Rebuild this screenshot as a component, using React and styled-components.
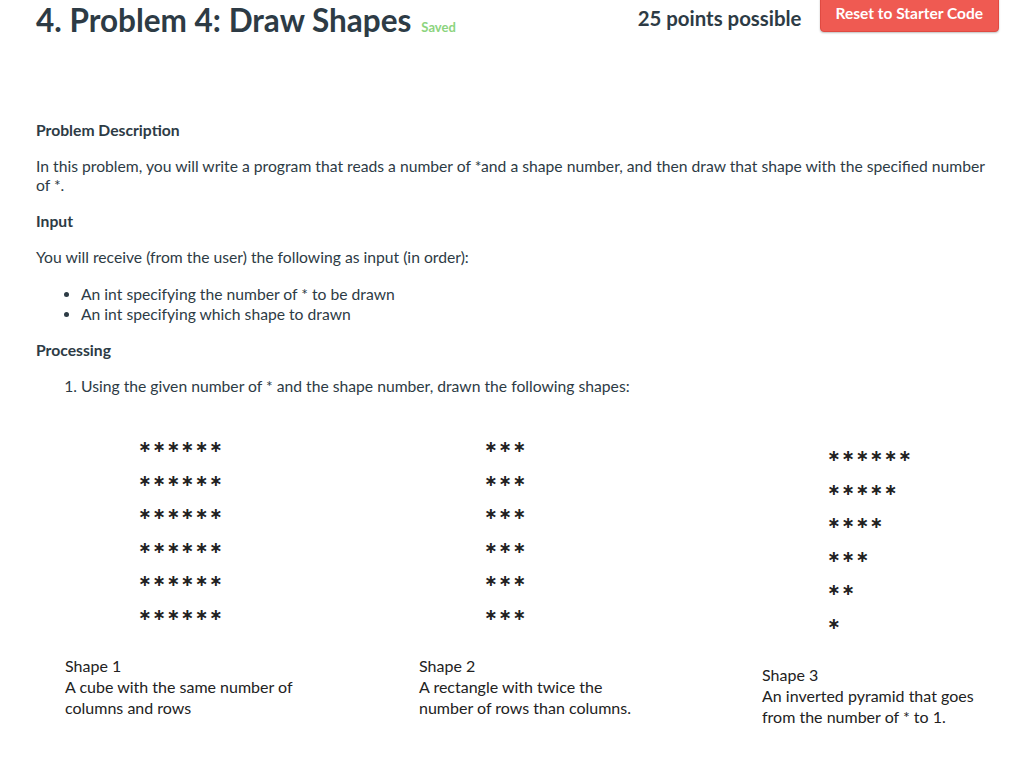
import React from "react";
import styled, { createGlobalStyle } from "styled-components";

const GlobalStyle = createGlobalStyle`
  body {
    margin: 0;
    background: #ffffff;
    font-family: Lato, "Open Sans", sans-serif;
    color: #2d3b45;
  }
`;

const Page = styled.div`
  width: 1024px;
  height: 762px;
  overflow: hidden;
  padding: 0 25px 0 36px;
  box-sizing: border-box;
`;

const Header = styled.div`
  display: flex;
  align-items: flex-start;
  justify-content: space-between;
`;

const TitleWrap = styled.div`
  display: flex;
  align-items: baseline;
  gap: 10px;
  margin-top: 1px;
`;

const Title = styled.h1`
  margin: 0;
  font-size: 31.5px;
  line-height: 38px;
  font-weight: 700;
  color: #2d3b45;
`;

const Saved = styled.span`
  font-size: 13px;
  font-weight: 700;
  color: #8cd47e;
`;

const Actions = styled.div`
  display: flex;
  align-items: flex-start;
  gap: 18px;
`;

const Points = styled.div`
  font-size: 20.4px;
  font-weight: 700;
  margin-top: 5px;
  line-height: 26px;
`;

const ResetButton = styled.button`
  margin-top: -5px;
  height: 37px;
  padding: 0 15px 2px;
  border: 1px solid #e04a42;
  border-radius: 4px;
  background: #ef5a52;
  color: #ffffff;
  font-family: Lato, sans-serif;
  font-size: 15.5px;
  font-weight: 700;
  box-shadow: 0 1px 2px rgba(0, 0, 0, 0.25);
`;

const Body = styled.div`
  margin-top: 82px;
  width: 960px;
  font-size: 15.7px;
  line-height: 19px;
`;

const Heading = styled.h3`
  margin: 0 0 17px;
  font-size: 15.7px;
  line-height: 19px;
  font-weight: 700;
`;

const Para = styled.p`
  margin: 0 0 17px;
`;

const List = styled.ul`
  margin: 0 0 17px;
  padding-left: 45px;
  li { line-height: 20px; }
`;

const OrderedList = styled.ol`
  margin: 0;
  padding-left: 45px;
`;

const Shapes = styled.div`
  display: grid;
  grid-template-columns: 354px 343px 1fr;
  margin: 34px 0 0 29px;
`;

const ShapeCol = styled.div`
  padding-top: ${(p) => p.$offset}px;
`;

const Stars = styled.div`
  padding-left: ${(p) => p.$indent}px;
  font-family: "DejaVu Sans", sans-serif;
  font-weight: 700;
  font-size: 16px;
  letter-spacing: 0.8px;
  line-height: 33.6px;
  color: #222;
  white-space: pre;
`;

const Caption = styled.div`
  margin-top: 23px;
  font-family: Lato, "Open Sans", sans-serif;
  font-size: 16px;
  line-height: 21px;
  color: #222;
`;

const shapes = [
  { rows: [6, 6, 6, 6, 6, 6], indent: 73, offset: 0, title: "Shape 1", text: ["A cube with the same number of", "columns and rows"] },
  { rows: [3, 3, 3, 3, 3, 3], indent: 65, offset: 0, title: "Shape 2", text: ["A rectangle with twice the", "number of rows than columns."] },
  { rows: [6, 5, 4, 3, 2, 1], indent: 65, offset: 9, title: "Shape 3", text: ["An inverted pyramid that goes", "from the number of * to 1."] },
];

export default function App() {
  return (
    <>
      <GlobalStyle />
      <Page>
        <Header>
          <TitleWrap>
            <Title>4. Problem 4: Draw Shapes</Title>
            <Saved>Saved</Saved>
          </TitleWrap>
          <Actions>
            <Points>25 points possible</Points>
            <ResetButton>Reset to Starter Code</ResetButton>
          </Actions>
        </Header>
        <Body>
          <Heading>Problem Description</Heading>
          <Para>
            In this problem, you will write a program that reads a number of *and a shape number, and then draw that shape with the specified number of *.
          </Para>
          <Heading>Input</Heading>
          <Para>You will receive (from the user) the following as input (in order):</Para>
          <List>
            <li>An int specifying the number of * to be drawn</li>
            <li>An int specifying which shape to drawn</li>
          </List>
          <Heading>Processing</Heading>
          <OrderedList>
            <li>Using the given number of * and the shape number, drawn the following shapes:</li>
          </OrderedList>
          <Shapes>
            {shapes.map((s) => (
              <ShapeCol key={s.title} $offset={s.offset}>
                <Stars $indent={s.indent}>
                  {s.rows.map((n, i) => (
                    <div key={i}>{"∗".repeat(n)}</div>
                  ))}
                </Stars>
                <Caption>
                  {s.title}
                  <br />
                  {s.text[0]}
                  <br />
                  {s.text[1]}
                </Caption>
              </ShapeCol>
            ))}
          </Shapes>
        </Body>
      </Page>
    </>
  );
}
